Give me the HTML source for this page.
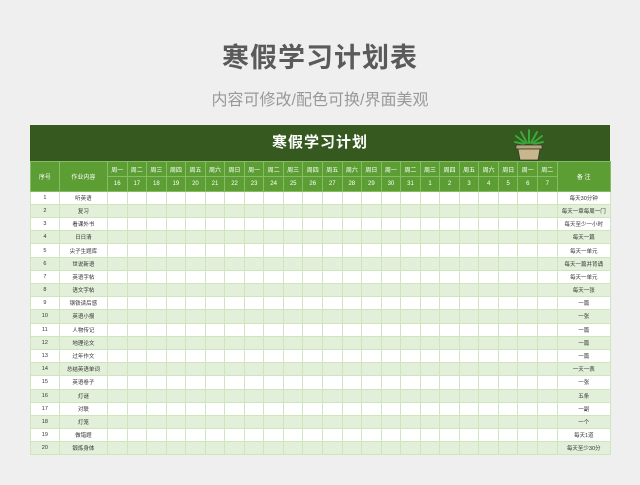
<!DOCTYPE html>
<html><head><meta charset="utf-8">
<style>
*{margin:0;padding:0;box-sizing:border-box}
body{width:640px;height:485px;background:#efefef;font-family:"Liberation Sans","Noto Sans CJK SC",sans-serif;position:relative;overflow:hidden}
.t1{position:absolute;top:36px;left:0;width:640px;text-align:center;font-size:27px;font-weight:bold;color:#5a5a5a;letter-spacing:1px}
.t2{position:absolute;top:86px;left:0;width:640px;text-align:center;font-size:16px;color:#999}
.band{position:absolute;left:30px;top:125px;width:580px;height:36px;background:#35591f;color:#fff;font-size:15px;font-weight:bold;text-align:center;line-height:36px;letter-spacing:1px}
table{position:absolute;left:30px;top:161px;width:580px;border-collapse:collapse;table-layout:fixed}
td{border:1px solid #cfe5bf;text-align:center;font-size:5.5px;color:#333;height:13.2px;padding:0;white-space:nowrap;overflow:hidden}
tr.h td{background:#5c9e34;color:#fff;border-color:#86bc64;font-size:6px;height:15px}
tr.h2 td{height:14.7px}
tr.a td{background:#fff}
tr.b td{background:#e2efd9}
</style></head><body>
<div class="t1">寒假学习计划表</div>
<div class="t2">内容可修改/配色可换/界面美观</div>
<div class="band">寒假学习计划
<svg style="position:absolute;left:478px;top:2px" width="42" height="34" viewBox="0 0 42 34">
<g stroke="#3aa83a" stroke-width="2" fill="none" stroke-linecap="round">
<path d="M21 16 L21 3"/><path d="M19 16 L13 5"/><path d="M23 16 L29 5"/><path d="M17 16 L8 9"/><path d="M25 16 L34 9"/><path d="M16 17 L7 15"/><path d="M26 17 L35 15"/></g>
<path d="M8 18 L34 18 L34 22 L8 22 Z" fill="#b9a57a" stroke="#333" stroke-width=".7"/>
<path d="M10 22 L32 22 L30 33 L12 33 Z" fill="#c8b78c" stroke="#333" stroke-width=".7"/>
</svg></div>
<table>
<colgroup><col style="width:28.7px"><col style="width:48.3px">
<col span="23" style="width:19.55px"><col style="width:53.35px"></colgroup>
<tr class="h"><td rowspan="2">序号</td><td rowspan="2">作业内容</td>
<td>周一</td><td>周二</td><td>周三</td><td>周四</td><td>周五</td><td>周六</td><td>周日</td><td>周一</td><td>周二</td><td>周三</td><td>周四</td><td>周五</td><td>周六</td><td>周日</td><td>周一</td><td>周二</td><td>周三</td><td>周四</td><td>周五</td><td>周六</td><td>周日</td><td>周一</td><td>周二</td><td rowspan="2">备 注</td></tr>
<tr class="h h2"><td>16</td><td>17</td><td>18</td><td>19</td><td>20</td><td>21</td><td>22</td><td>23</td><td>24</td><td>25</td><td>26</td><td>27</td><td>28</td><td>29</td><td>30</td><td>31</td><td>1</td><td>2</td><td>3</td><td>4</td><td>5</td><td>6</td><td>7</td></tr>
<tr class="a"><td>1</td><td>听英语</td><td></td><td></td><td></td><td></td><td></td><td></td><td></td><td></td><td></td><td></td><td></td><td></td><td></td><td></td><td></td><td></td><td></td><td></td><td></td><td></td><td></td><td></td><td></td><td>每天30分钟</td></tr>
<tr class="b"><td>2</td><td>复习</td><td></td><td></td><td></td><td></td><td></td><td></td><td></td><td></td><td></td><td></td><td></td><td></td><td></td><td></td><td></td><td></td><td></td><td></td><td></td><td></td><td></td><td></td><td></td><td>每天一章每周一门</td></tr>
<tr class="a"><td>3</td><td>看课外书</td><td></td><td></td><td></td><td></td><td></td><td></td><td></td><td></td><td></td><td></td><td></td><td></td><td></td><td></td><td></td><td></td><td></td><td></td><td></td><td></td><td></td><td></td><td></td><td>每天至少一小时</td></tr>
<tr class="b"><td>4</td><td>日日清</td><td></td><td></td><td></td><td></td><td></td><td></td><td></td><td></td><td></td><td></td><td></td><td></td><td></td><td></td><td></td><td></td><td></td><td></td><td></td><td></td><td></td><td></td><td></td><td>每天一篇</td></tr>
<tr class="a"><td>5</td><td>尖子生题库</td><td></td><td></td><td></td><td></td><td></td><td></td><td></td><td></td><td></td><td></td><td></td><td></td><td></td><td></td><td></td><td></td><td></td><td></td><td></td><td></td><td></td><td></td><td></td><td>每天一单元</td></tr>
<tr class="b"><td>6</td><td>世说新语</td><td></td><td></td><td></td><td></td><td></td><td></td><td></td><td></td><td></td><td></td><td></td><td></td><td></td><td></td><td></td><td></td><td></td><td></td><td></td><td></td><td></td><td></td><td></td><td>每天一篇并背诵</td></tr>
<tr class="a"><td>7</td><td>英语字帖</td><td></td><td></td><td></td><td></td><td></td><td></td><td></td><td></td><td></td><td></td><td></td><td></td><td></td><td></td><td></td><td></td><td></td><td></td><td></td><td></td><td></td><td></td><td></td><td>每天一单元</td></tr>
<tr class="b"><td>8</td><td>语文字帖</td><td></td><td></td><td></td><td></td><td></td><td></td><td></td><td></td><td></td><td></td><td></td><td></td><td></td><td></td><td></td><td></td><td></td><td></td><td></td><td></td><td></td><td></td><td></td><td>每天一张</td></tr>
<tr class="a"><td>9</td><td>钢铁读后感</td><td></td><td></td><td></td><td></td><td></td><td></td><td></td><td></td><td></td><td></td><td></td><td></td><td></td><td></td><td></td><td></td><td></td><td></td><td></td><td></td><td></td><td></td><td></td><td>一篇</td></tr>
<tr class="b"><td>10</td><td>英语小报</td><td></td><td></td><td></td><td></td><td></td><td></td><td></td><td></td><td></td><td></td><td></td><td></td><td></td><td></td><td></td><td></td><td></td><td></td><td></td><td></td><td></td><td></td><td></td><td>一张</td></tr>
<tr class="a"><td>11</td><td>人物传记</td><td></td><td></td><td></td><td></td><td></td><td></td><td></td><td></td><td></td><td></td><td></td><td></td><td></td><td></td><td></td><td></td><td></td><td></td><td></td><td></td><td></td><td></td><td></td><td>一篇</td></tr>
<tr class="b"><td>12</td><td>地理论文</td><td></td><td></td><td></td><td></td><td></td><td></td><td></td><td></td><td></td><td></td><td></td><td></td><td></td><td></td><td></td><td></td><td></td><td></td><td></td><td></td><td></td><td></td><td></td><td>一篇</td></tr>
<tr class="a"><td>13</td><td>过年作文</td><td></td><td></td><td></td><td></td><td></td><td></td><td></td><td></td><td></td><td></td><td></td><td></td><td></td><td></td><td></td><td></td><td></td><td></td><td></td><td></td><td></td><td></td><td></td><td>一篇</td></tr>
<tr class="b"><td>14</td><td>总结英语单词</td><td></td><td></td><td></td><td></td><td></td><td></td><td></td><td></td><td></td><td></td><td></td><td></td><td></td><td></td><td></td><td></td><td></td><td></td><td></td><td></td><td></td><td></td><td></td><td>一天一表</td></tr>
<tr class="a"><td>15</td><td>英语卷子</td><td></td><td></td><td></td><td></td><td></td><td></td><td></td><td></td><td></td><td></td><td></td><td></td><td></td><td></td><td></td><td></td><td></td><td></td><td></td><td></td><td></td><td></td><td></td><td>一张</td></tr>
<tr class="b"><td>16</td><td>灯谜</td><td></td><td></td><td></td><td></td><td></td><td></td><td></td><td></td><td></td><td></td><td></td><td></td><td></td><td></td><td></td><td></td><td></td><td></td><td></td><td></td><td></td><td></td><td></td><td>五条</td></tr>
<tr class="a"><td>17</td><td>对联</td><td></td><td></td><td></td><td></td><td></td><td></td><td></td><td></td><td></td><td></td><td></td><td></td><td></td><td></td><td></td><td></td><td></td><td></td><td></td><td></td><td></td><td></td><td></td><td>一副</td></tr>
<tr class="b"><td>18</td><td>灯笼</td><td></td><td></td><td></td><td></td><td></td><td></td><td></td><td></td><td></td><td></td><td></td><td></td><td></td><td></td><td></td><td></td><td></td><td></td><td></td><td></td><td></td><td></td><td></td><td>一个</td></tr>
<tr class="a"><td>19</td><td>做错题</td><td></td><td></td><td></td><td></td><td></td><td></td><td></td><td></td><td></td><td></td><td></td><td></td><td></td><td></td><td></td><td></td><td></td><td></td><td></td><td></td><td></td><td></td><td></td><td>每天1道</td></tr>
<tr class="b"><td>20</td><td>锻炼身体</td><td></td><td></td><td></td><td></td><td></td><td></td><td></td><td></td><td></td><td></td><td></td><td></td><td></td><td></td><td></td><td></td><td></td><td></td><td></td><td></td><td></td><td></td><td></td><td>每天至少30分</td></tr>
</table>
</body></html>
